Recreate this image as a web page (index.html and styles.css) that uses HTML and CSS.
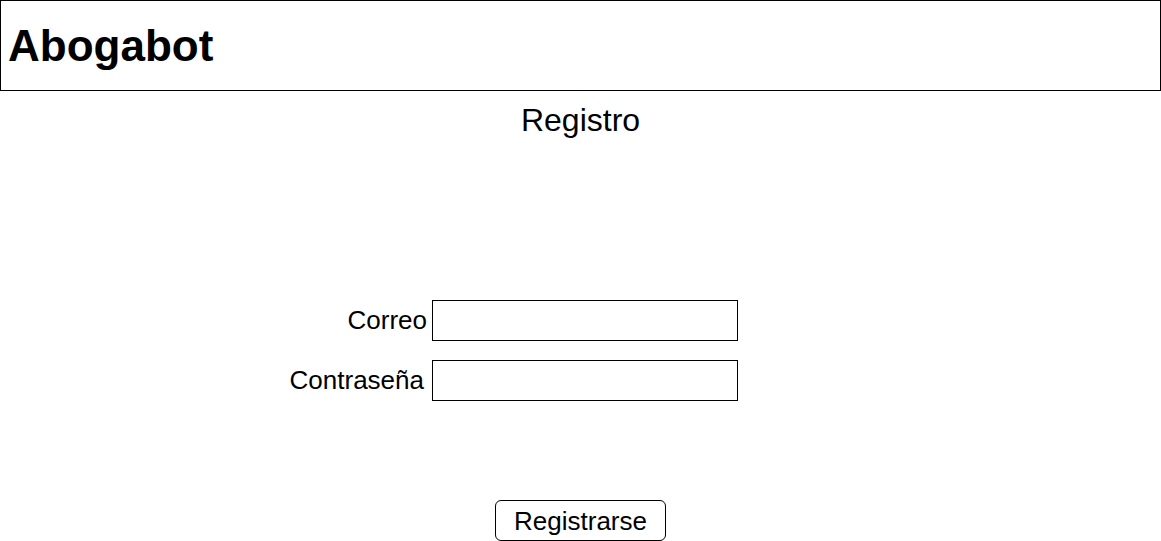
FILE: index.html
```html
<!DOCTYPE html>
<html lang="es">
<head>
<meta charset="utf-8">
<title>Abogabot - Registro</title>
<link rel="stylesheet" href="styles.css">
</head>
<body>
<header class="topbar">
  <h1 class="brand">Abogabot</h1>
</header>
<main class="page">
  <h2 class="title">Registro</h2>
  <form class="form">
    <label class="label" for="correo">Correo</label>
    <input class="field" id="correo" type="text">
    <label class="label label-pass" for="pass">Contraseña</label>
    <input class="field" id="pass" type="password">
  </form>
  <div class="actions">
    <button class="btn" type="button">Registrarse</button>
  </div>
</main>
</body>
</html>
```

FILE: styles.css
```css
html, body {
  margin: 0;
  padding: 0;
  background: #fff;
  color: #000;
  font-family: "Liberation Sans", Arial, sans-serif;
}

.topbar {
  box-sizing: border-box;
  width: 1161px;
  height: 91px;
  border: 1px solid #000;
  padding-left: 7px;
  display: flex;
  align-items: center;
}

.brand {
  margin: 0;
  font-size: 44px;
  font-weight: bold;
  line-height: 50px;
  position: relative;
  top: 0px;
}

.page {
  display: flex;
  flex-direction: column;
}

.title {
  margin: 9px 0 0 0;
  font-size: 32px;
  font-weight: normal;
  line-height: 40px;
  text-align: center;
}

.form {
  margin-top: 160px;
  display: grid;
  grid-template-columns: 427px 306px;
  column-gap: 5px;
  row-gap: 19px;
  align-items: center;
}

.label {
  justify-self: end;
  font-size: 26px;
  line-height: 30px;
  position: relative;
  top: -1px;
}

.label-pass {
  margin-right: 3px;
}

.field {
  box-sizing: border-box;
  width: 306px;
  height: 41px;
  margin: 0;
  border: 1px solid #000;
  border-radius: 0;
  padding: 0 6px;
  background: #fff;
  font-family: "Liberation Sans", Arial, sans-serif;
  font-size: 20px;
  outline: none;
}

.actions {
  margin-top: 99px;
  display: flex;
  justify-content: center;
}

.btn {
  box-sizing: border-box;
  width: 171px;
  height: 41px;
  margin: 0;
  padding: 0;
  border: 1px solid #000;
  border-radius: 6px;
  background: #fff;
  color: #000;
  font-family: "Liberation Sans", Arial, sans-serif;
  font-size: 26px;
  line-height: 30px;
}
```
